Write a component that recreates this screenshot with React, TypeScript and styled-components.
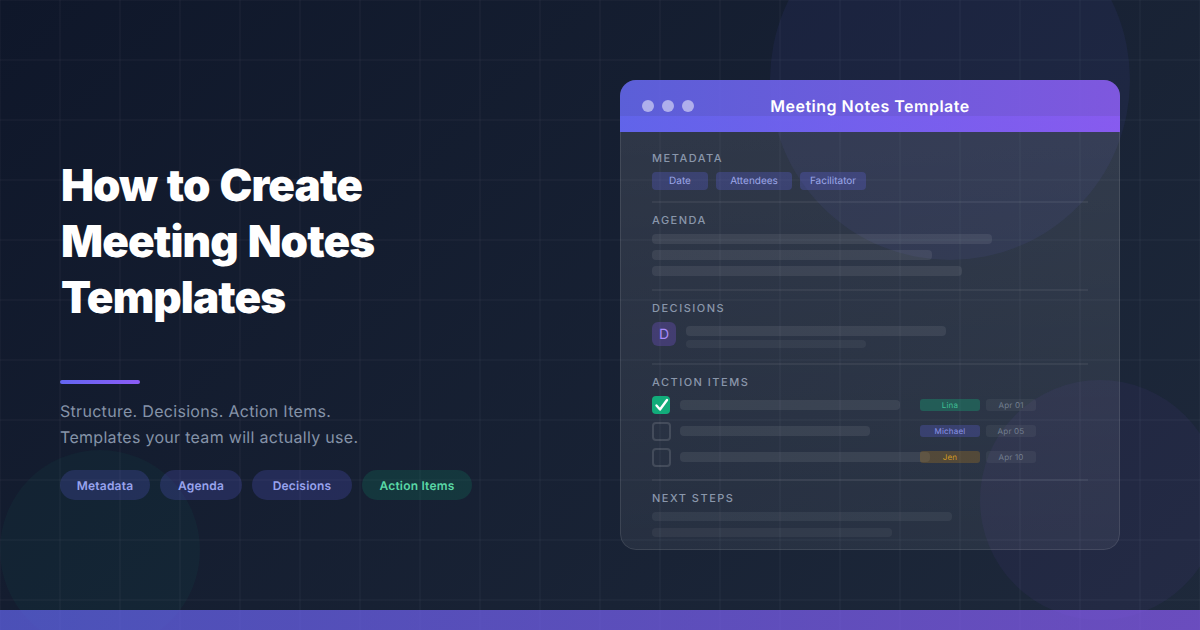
import React from "react";
import styled, { createGlobalStyle } from "styled-components";

const Global = createGlobalStyle`
  html, body { margin: 0; padding: 0; width: 1200px; height: 630px; overflow: hidden; background: #0f172a; }
  * { box-sizing: border-box; text-rendering: geometricPrecision; }
`;

const Page = styled.div`
  position: relative;
  width: 1200px;
  height: 630px;
  overflow: hidden;
  display: flex;
  align-items: flex-start;
  font-family: Inter, "Liberation Sans", sans-serif;
  background: linear-gradient(135deg, #0f172a 0%, #1e293b 100%);
`;

const Grid = styled.div`
  position: absolute;
  inset: 0;
  background-image:
    linear-gradient(to right, rgba(255,255,255,0.025) 2px, transparent 2px),
    linear-gradient(to bottom, rgba(255,255,255,0.025) 2px, transparent 2px);
  background-size: 60px 60px;
  background-position: -1px -1px;
`;

const Blob = styled.div<{ $x: number; $y: number; $r: number; $c: string }>`
  position: absolute;
  left: ${p => p.$x - p.$r}px;
  top: ${p => p.$y - p.$r}px;
  width: ${p => p.$r * 2}px;
  height: ${p => p.$r * 2}px;
  border-radius: 50%;
  background: ${p => p.$c};
`;

const BottomBar = styled.div`
  position: absolute;
  left: 0;
  right: 0;
  bottom: 0;
  height: 20px;
  background: linear-gradient(90deg, #6366f1, #8b5cf6);
  opacity: 0.7;
`;

const Left = styled.div`
  position: relative;
  width: 560px;
  padding: 157px 0 0 60px;
  flex: none;
`;

const Title = styled.h1`
  margin: 0 0 0 1px;
  color: #fff;
  font-size: 44px;
  font-weight: 900;
  line-height: 56px;
  letter-spacing: -0.9px;
  word-spacing: 2px;
`;

const Accent = styled.div`
  width: 80px;
  height: 4px;
  margin-top: 55px;
  border-radius: 2px;
  background: linear-gradient(90deg, #6366f1, #8b5cf6);
`;

const Sub = styled.p`
  margin: 14px 0 0;
  color: #8593a8;
  font-size: 16px;
  line-height: 26px;
  font-weight: 400;
  letter-spacing: 0.3px;
`;

const Pills = styled.div`
  display: flex;
  gap: 10px;
  margin-top: 20px;
`;

const Pill = styled.div<{ $w: number; $green?: boolean }>`
  width: ${p => p.$w}px;
  height: 30px;
  border-radius: 15px;
  display: flex;
  align-items: center;
  justify-content: center;
  font-size: 12px;
  font-weight: 600;
  letter-spacing: 0.2px;
  color: ${p => (p.$green ? "#5ad8a6" : "#98a3ee")};
  background: ${p => (p.$green ? "rgba(16,185,129,0.15)" : "rgba(99,102,241,0.2)")};
`;

const Card = styled.div`
  position: relative;
  margin: 80px 0 0 60px;
  width: 500px;
  height: 470px;
  flex: none;
  border-radius: 16px;
  overflow: hidden;
  background: linear-gradient(180deg, rgba(255,255,255,0.115), rgba(255,255,255,0.06));
  &::after {
    content: "";
    position: absolute;
    inset: 0;
    border-radius: 16px;
    border: 1.5px solid rgba(255,255,255,0.1);
    clip-path: inset(52px 0 0 0);
  }
`;

const Header = styled.div`
  position: relative;
  height: 52px;
  padding: 0 22px;
  display: flex;
  align-items: flex-start;
  &::before {
    content: "";
    position: absolute;
    inset: 0;
    background: linear-gradient(90deg, #6366f1, #8b5cf6);
    opacity: 0.85;
  }
  &::after {
    content: "";
    position: absolute;
    left: 0;
    right: 0;
    bottom: 0;
    height: 16px;
    background: linear-gradient(90deg, #6366f1, #8b5cf6);
    opacity: 0.7;
  }
`;

const Dots = styled.div`
  position: relative;
  z-index: 1;
  display: flex;
  gap: 8px;
  margin-top: 20px;
`;

const Dot = styled.span`
  width: 12px;
  height: 12px;
  border-radius: 50%;
  background: rgba(255,255,255,0.5);
`;

const HeaderTitle = styled.div`
  position: absolute;
  z-index: 1;
  left: 0;
  right: 0;
  top: 16px;
  text-align: center;
  color: #fff;
  font-size: 16px;
  font-weight: 600;
  line-height: 20px;
  letter-spacing: 0.5px;
`;

const Body = styled.div`
  padding: 19px 32px 0;
`;

const Section = styled.section<{ $pb: number }>`
  padding-bottom: ${p => p.$pb}px;
  margin-bottom: 10px;
  border-bottom: 2px solid rgba(255,255,255,0.06);
  &:last-child { border-bottom: 0; }
`;

const Label = styled.div`
  color: #8a97ab;
  font-size: 11px;
  line-height: 14px;
  font-weight: 500;
  letter-spacing: 1.5px;
`;

const Chips = styled.div`
  display: flex;
  gap: 8px;
  margin-top: 7px;
`;

const Chip = styled.div<{ $w: number }>`
  width: ${p => p.$w}px;
  height: 18px;
  border-radius: 4px;
  font-size: 10px;
  line-height: 18px;
  text-align: center;
  color: #9ca6e8;
  background: rgba(99,102,241,0.25);
`;

const Bars = styled.div<{ $gap?: number }>`
  display: flex;
  flex-direction: column;
  gap: ${p => p.$gap ?? 6}px;
  margin-top: 7px;
`;

const Bar = styled.div<{ $w: number; $h?: number; $a?: number }>`
  width: ${p => p.$w}px;
  height: ${p => p.$h ?? 10}px;
  border-radius: 4px;
  background: rgba(255,255,255,${p => p.$a ?? 0.08});
`;

const Decision = styled.div`
  display: flex;
  gap: 10px;
  margin-top: 7px;
`;

const Badge = styled.div`
  width: 24px;
  height: 24px;
  border-radius: 6px;
  display: flex;
  align-items: center;
  justify-content: center;
  color: #a78bfa;
  font-size: 14px;
  background: rgba(139,92,246,0.25);
`;

const DecisionBars = styled.div`
  display: flex;
  flex-direction: column;
  gap: 4px;
  padding-top: 4px;
`;

const Todos = styled.div`
  display: flex;
  flex-direction: column;
  gap: 8px;
  margin-top: 7px;
`;

const Todo = styled.div`
  display: grid;
  grid-template-columns: 18px 230px 60px 50px;
  align-items: center;
  height: 18px;
  column-gap: 10px;
`;

const Check = styled.div<{ $on?: boolean }>`
  width: ${p => (p.$on ? 18 : 19)}px;
  height: ${p => (p.$on ? 18 : 19)}px;
  margin: ${p => (p.$on ? 0 : -0.5)}px;
  border-radius: 4px;
  display: flex;
  align-items: center;
  justify-content: center;
  background: ${p => (p.$on ? "rgba(16,185,129,0.9)" : "transparent")};
  border: ${p => (p.$on ? "0" : "2px solid rgba(255,255,255,0.13)")};
`;

const Owner = styled.div<{ $bg: string; $fg: string }>`
  height: 12px;
  border-radius: 3px;
  font-size: 8px;
  line-height: 13px;
  letter-spacing: 0.2px;
  text-align: center;
  color: ${p => p.$fg};
  background: ${p => p.$bg};
`;

const When = styled.div`
  width: 50px;
  height: 12px;
  margin-left: -4px;
  border-radius: 3px;
  font-size: 8px;
  line-height: 13px;
  letter-spacing: 0.2px;
  text-align: center;
  color: #737f90;
  background: rgba(255,255,255,0.05);
`;

const todos = [
  { w: 220, on: true, name: "Lina", bg: "rgba(16,185,129,0.3)", fg: "#3fbf95", date: "Apr 01" },
  { w: 190, on: false, name: "Michael", bg: "rgba(99,102,241,0.25)", fg: "#8a93e8", date: "Apr 05" },
  { w: 250, on: false, name: "Jen", bg: "rgba(245,158,11,0.2)", fg: "#d19a22", date: "Apr 10" },
];

export default function App() {
  return (
    <Page>
      <Global />
      <Grid />
      <Blob $x={950} $y={80} $r={180} $c="rgba(99,102,241,0.07)" />
      <Blob $x={1100} $y={500} $r={120} $c="rgba(139,92,246,0.06)" />
      <Blob $x={100} $y={550} $r={100} $c="rgba(16,185,129,0.05)" />
      <BottomBar />
      <Left>
        <Title>How to Create<br />Meeting Notes<br />Templates</Title>
        <Accent />
        <Sub>Structure. Decisions. Action Items.<br />Templates your team will actually use.</Sub>
        <Pills>
          <Pill $w={90}>Metadata</Pill>
          <Pill $w={82}>Agenda</Pill>
          <Pill $w={100}>Decisions</Pill>
          <Pill $w={110} $green>Action Items</Pill>
        </Pills>
      </Left>
      <Card>
        <Header>
          <Dots><Dot /><Dot /><Dot /></Dots>
          <HeaderTitle>Meeting Notes Template</HeaderTitle>
        </Header>
        <Body>
          <Section $pb={11}>
            <Label>METADATA</Label>
            <Chips>
              <Chip $w={56}>Date</Chip>
              <Chip $w={76}>Attendees</Chip>
              <Chip $w={66}>Facilitator</Chip>
            </Chips>
          </Section>
          <Section $pb={13}>
            <Label>AGENDA</Label>
            <Bars>
              <Bar $w={340} />
              <Bar $w={280} />
              <Bar $w={310} />
            </Bars>
          </Section>
          <Section $pb={15}>
            <Label>DECISIONS</Label>
            <Decision>
              <Badge>D</Badge>
              <DecisionBars>
                <Bar $w={260} />
                <Bar $w={180} $h={8} $a={0.05} />
              </DecisionBars>
            </Decision>
          </Section>
          <Section $pb={13}>
            <Label>ACTION ITEMS</Label>
            <Todos>
              {todos.map(t => (
                <Todo key={t.name}>
                  <Check $on={t.on}>
                    {t.on && (
                      <svg width="18" height="18" viewBox="0 0 18 18" fill="none">
                        <path d="M4.5 9.5L8 13.5L15 4" stroke="#fff" strokeWidth="2.4" strokeLinecap="round" strokeLinejoin="round" />
                      </svg>
                    )}
                  </Check>
                  <Bar $w={t.w} />
                  <Owner $bg={t.bg} $fg={t.fg}>{t.name}</Owner>
                  <When>{t.date}</When>
                </Todo>
              ))}
            </Todos>
          </Section>
          <Section $pb={0}>
            <Label>NEXT STEPS</Label>
            <Bars $gap={7}>
              <Bar $w={300} $h={9} $a={0.06} />
              <Bar $w={240} $h={9} $a={0.05} />
            </Bars>
          </Section>
        </Body>
      </Card>
    </Page>
  );
}
